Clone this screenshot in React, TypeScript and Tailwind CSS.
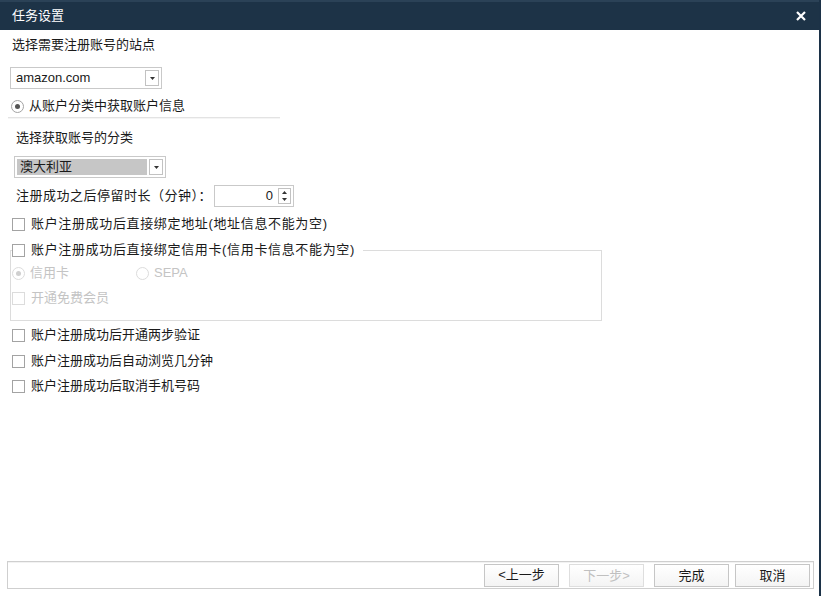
import React from 'react';

const Check: React.FC<{ label: string; disabled?: boolean; className?: string; wide?: boolean }> = ({ label, disabled, className = '', wide }) => (
  <div className={`flex items-center h-[18px] ${className}`}>
    <span className={`w-[13px] h-[13px] border bg-white ${disabled ? 'border-[#dcdcdc]' : 'border-[#a3a3a3]'}`} />
    <span className={`ml-[6px] text-[13px] leading-[18px] ${wide ? 'tracking-[0.65px]' : ''} ${disabled ? 'text-[#c4c4c4]' : 'text-[#1a1a1a]'}`}>{label}</span>
  </div>
);

const Radio: React.FC<{ label: string; checked?: boolean; disabled?: boolean; className?: string }> = ({ label, checked, disabled, className = '' }) => (
  <div className={`flex items-center h-[18px] ${className}`}>
    <span className={`w-[13px] h-[13px] rounded-full border flex items-center justify-center bg-white ${disabled ? 'border-[#dcdcdc]' : 'border-[#a3a3a3]'}`}>
      {checked && <span className={`w-[5px] h-[5px] rounded-full ${disabled ? 'bg-[#cfcfcf]' : 'bg-[#555]'}`} />}
    </span>
    <span className={`ml-[5px] text-[13px] leading-[18px] ${disabled ? 'text-[#c4c4c4]' : 'text-[#1a1a1a]'}`}>{label}</span>
  </div>
);

const Select: React.FC<{ value: string; selected?: boolean; className?: string }> = ({ value, selected, className = '' }) => (
  <div className={`flex h-[22px] w-[152px] border border-[#c9c9c9] bg-white p-[2px] ${className}`}>
    <div className={`flex-1 flex items-center pl-[3px] text-[13px] text-[#1a1a1a] ${selected ? 'bg-[#c6c6c6]' : ''}`}>{value}</div>
    <div className="w-[14px] ml-[2px] border border-[#c2c2c2] flex items-center justify-center">
      <svg width="5" height="3" viewBox="0 0 5 3"><path d="M0 0h5L2.5 3z" fill="#333" /></svg>
    </div>
  </div>
);

const Btn: React.FC<{ label: string; disabled?: boolean }> = ({ label, disabled }) => (
  <button className={`w-[75px] h-[23px] border bg-gradient-to-b from-white to-[#f4f4f4] text-[13px] ${disabled ? 'border-[#dedede] text-[#c0c0c0]' : 'border-[#c6c6c6] text-[#1a1a1a]'}`}>
    {label}
  </button>
);

export default function App() {
  return (
    <div className="w-[821px] h-[596px] bg-white flex flex-col border-r-2 border-[#1c3247] font-['Liberation_Sans','Noto_Sans_CJK_SC',sans-serif]">
      <div className="h-[30px] bg-[#1d3347] border-t-[2px] border-[#2b4257] flex items-center justify-between pl-[12px] pr-[13px] text-white">
        <span className="text-[13px]">任务设置</span>
        <svg width="10" height="10" viewBox="0 0 10 10"><path d="M1 1l8 8M9 1l-8 8" stroke="#fff" strokeWidth="2.2" /></svg>
      </div>

      <div className="flex-1 flex flex-col pl-[12px]">
        <div className="mt-[6px] text-[13px] leading-[18px] text-[#1a1a1a]">选择需要注册账号的站点</div>
        <Select value="amazon.com" className="mt-[13px] -ml-[2px] w-[152px]" />
        <Radio label="从账户分类中获取账户信息" checked className="mt-[8px] -ml-[1px]" />
        <div className="mt-[2px] -ml-[4px] w-[272px] h-[2px] border-t border-b border-[#e3e3e3] border-b-[#f5f5f5]" />

        <div className="ml-[4px] mt-[10px] text-[13px] leading-[18px] text-[#1a1a1a]">选择获取账号的分类</div>
        <Select value="澳大利亚" selected className="mt-[9px] ml-[2px] w-[152px]" />
        <div className="ml-[4px] mt-[7px] flex items-center">
          <span className="text-[13px] leading-[18px] tracking-[0.5px] text-[#1a1a1a]">注册成功之后停留时长（分钟）：</span>
          <div className="ml-[2px] w-[80px] h-[22px] border border-[#c9c9c9] flex">
            <div className="flex-1 text-right pr-[3px] text-[13px] leading-[20px] text-[#1a1a1a]">0</div>
            <div className="w-[13px] m-[2px] border border-[#c2c2c2] flex flex-col items-center justify-around">
              <svg width="5" height="3" viewBox="0 0 5 3"><path d="M0 3h5L2.5 0z" fill="#333" /></svg>
              <svg width="5" height="3" viewBox="0 0 5 3"><path d="M0 0h5L2.5 3z" fill="#333" /></svg>
            </div>
          </div>
        </div>

        <Check label="账户注册成功后直接绑定地址(地址信息不能为空)" wide className="mt-[8px]" />

        <div className="relative mt-[8px] w-[592px] h-[80px] -ml-[2px]">
          <div className="absolute left-0 right-0 top-[9px] bottom-0 border border-[#dcdcdc] shadow-[inset_1px_1px_0_#fff]" />
          <div className="absolute left-[2px] top-0 bg-white pr-[8px]">
            <Check label="账户注册成功后直接绑定信用卡(信用卡信息不能为空)" wide />
          </div>
          <div className="absolute left-[2px] top-[23px] flex">
            <Radio label="信用卡" checked disabled />
            <Radio label="SEPA" disabled className="ml-[67px]" />
          </div>
          <Check label="开通免费会员" disabled className="absolute left-[2px] top-[48px]" />
        </div>

        <Check label="账户注册成功后开通两步验证" className="mt-[5px]" />
        <Check label="账户注册成功后自动浏览几分钟" className="mt-[8px]" />
        <Check label="账户注册成功后取消手机号码" className="mt-[7px]" />
      </div>

      <div className="ml-[7px] mr-[5px] mb-[7px] h-[28px] border border-[#cfcfcf] shadow-[inset_0_1px_0_#f2f2f2] flex items-center justify-end pr-[3px]">
        <Btn label="<上一步" />
        <div className="ml-[10px]"><Btn label="下一步>" disabled /></div>
        <div className="ml-[10px]"><Btn label="完成" /></div>
        <div className="ml-[6px]"><Btn label="取消" /></div>
      </div>
    </div>
  );
}
